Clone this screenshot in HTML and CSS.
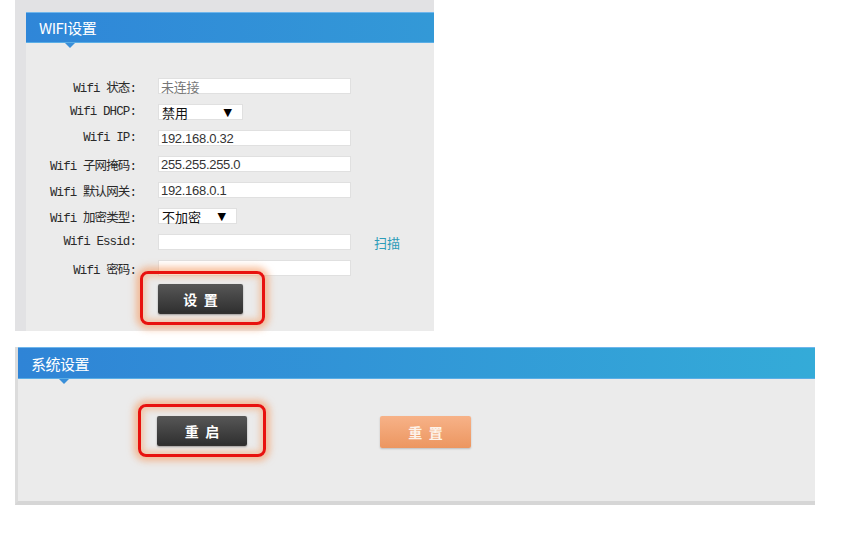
FILE: index.html
```html
<!DOCTYPE html>
<html lang="zh">
<head>
<meta charset="utf-8">
<title>WIFI设置</title>
<link rel="stylesheet" href="styles.css">
</head>
<body>
<section class="panel-wifi">
  <div class="card">
    <div class="card-head"><span class="card-title">WIFI设置</span></div>
    <div class="card-body wifi-body">
      <div class="form">
        <label class="lbl">Wifi 状态:</label>
        <div class="field"><span class="input muted">未连接</span></div>
        <label class="lbl">Wifi DHCP:</label>
        <div class="field"><span class="select s-dhcp"><span>禁用</span><span class="arrow">▼</span></span></div>
        <label class="lbl">Wifi IP:</label>
        <div class="field"><span class="input">192.168.0.32</span></div>
        <label class="lbl">Wifi 子网掩码:</label>
        <div class="field"><span class="input">255.255.255.0</span></div>
        <label class="lbl">Wifi 默认网关:</label>
        <div class="field"><span class="input">192.168.0.1</span></div>
        <label class="lbl">Wifi 加密类型:</label>
        <div class="field"><span class="select s-enc"><span>不加密</span><span class="arrow">▼</span></span></div>
        <label class="lbl">Wifi Essid:</label>
        <div class="field"><span class="input"></span><a class="scan">扫描</a></div>
        <label class="lbl">Wifi 密码:</label>
        <div class="field"><span class="input"></span></div>
      </div>
      <div class="btn-row wifi-btn-row">
        <div class="hl hl-set"><button class="btn btn-dark">设&nbsp;&nbsp;置</button></div>
      </div>
    </div>
  </div>
</section>

<section class="panel-sys">
  <div class="card-head head-sys"><span class="card-title">系统设置</span></div>
  <div class="card-body sys-body">
    <div class="hl hl-reboot"><button class="btn btn-dark btn-wide">重&nbsp;&nbsp;启</button></div>
    <button class="btn btn-orange btn-wide">重&nbsp;&nbsp;置</button>
  </div>
</section>
</body>
</html>
```

FILE: styles.css
```css
* { box-sizing: border-box; }
html, body { margin: 0; padding: 0; background: #ffffff; }
body {
  width: 866px;
  height: 534px;
  overflow: hidden;
  font-family: "Liberation Sans", "Noto Sans CJK SC", sans-serif;
}

.panel-wifi {
  margin-left: 15px;
  width: 419px;
  height: 331px;
  background: #e2e2e4;
  padding: 12px 0 0 11px;
}
.card {
  height: 100%;
  display: flex;
  flex-direction: column;
  background: #ebebeb;
}
.card-head {
  position: relative;
  height: 31px;
  background: linear-gradient(to right, #2f86d8, #3399d7);
  border-top: 1px solid #6fb6ec;
  border-bottom: 1px solid #5aaee6;
  display: flex;
  align-items: center;
  padding-left: 13px;
  flex: none;
}
.card-head::after {
  content: "";
  position: absolute;
  left: 39px;
  bottom: -6px;
  border-left: 5px solid transparent;
  border-right: 5px solid transparent;
  border-top: 5px solid #3a8fd9;
}
.card-title {
  color: #ffffff;
  font-family: "Noto Sans CJK SC", sans-serif;
  font-size: 15px;
  letter-spacing: -0.5px;
  line-height: 1;
}
.card-body { flex: 1; }

.wifi-body { padding-top: 30px; }
.form {
  display: grid;
  grid-template-columns: 110px auto;
  column-gap: 22px;
  grid-auto-rows: 26px;
  align-items: center;
}
.lbl {
  text-align: right;
  font-family: "Liberation Mono", "Noto Sans CJK SC", monospace;
  font-size: 12.5px;
  letter-spacing: -0.9px;
  color: #2a2a2a;
  white-space: nowrap;
}
.field { display: flex; align-items: center; }
.input {
  display: flex;
  align-items: center;
  width: 193px;
  height: 16px;
  background: #fff;
  border: 1px solid #e0e0e0;
  padding-left: 2px;
  font-size: 13px;
  color: #333;
  font-family: "Liberation Sans", "Noto Sans CJK SC", sans-serif;
  letter-spacing: -0.3px;
}
.input.muted { color: #777; }
.select {
  display: flex;
  align-items: center;
  justify-content: space-between;
  height: 16px;
  background: #fff;
  border: 1px solid #e0e0e0;
  padding: 0 10px 0 3px;
  font-size: 13px;
  color: #111;
  font-family: "Noto Sans CJK SC", sans-serif;
}
.s-dhcp { width: 85px; }
.s-enc { width: 79px; }
.arrow { font-size: 11px; color: #000; font-family: "DejaVu Sans", sans-serif; }
.scan {
  margin-left: 23px;
  color: #2c9cb8;
  font-size: 13px;
  font-family: "Noto Sans CJK SC", sans-serif;
}

.wifi-btn-row { padding: 3px 0 0 132px; }
.hl { position: relative; display: inline-block; }
.hl::before {
  content: "";
  position: absolute;
  top: -13px;
  bottom: -11px;
  left: -18px;
  right: -22px;
  border: 3px solid #e8120e;
  border-radius: 8px;
  box-shadow: 0 0 7px 4px rgba(245, 150, 90, 0.6), inset 0 0 6px 3px rgba(245, 160, 100, 0.5);
  pointer-events: none;
}
.btn {
  border: none;
  height: 30px;
  width: 85px;
  border-radius: 2px;
  font-family: "Noto Sans CJK SC", sans-serif;
  font-weight: 700;
  font-size: 14px;
  color: #fff;
  padding: 0;
  display: block;
}
.btn-wide { width: 90px; }
.btn-dark {
  background: linear-gradient(#575757, #2e2e2e);
  box-shadow: 0 1px 2px rgba(0,0,0,0.35);
}
.btn-orange {
  background: linear-gradient(#f7b288, #ec9660);
  color: #fdf3ea;
  width: 91px;
  height: 32px;
  box-shadow: 0 1px 2px rgba(0,0,0,0.2);
}

.panel-sys {
  margin: 16px 0 0 15px;
  width: 800px;
  height: 158px;
  display: flex;
  flex-direction: column;
  background: #ebebeb;
  border-left: 3px solid #dcdcdc;
  border-bottom: 4px solid #d6d6d6;
}
.head-sys {
  height: 32px;
  background: linear-gradient(to right, #2f84d6, #34abd8);
}
.head-sys::after { left: 41px; }
.sys-body {
  display: flex;
  align-items: flex-start;
  padding: 37px 0 0 139px;
  gap: 133px;
}
.hl-reboot::before { top: -12px; bottom: -11px; left: -19px; right: -19px; }
```
